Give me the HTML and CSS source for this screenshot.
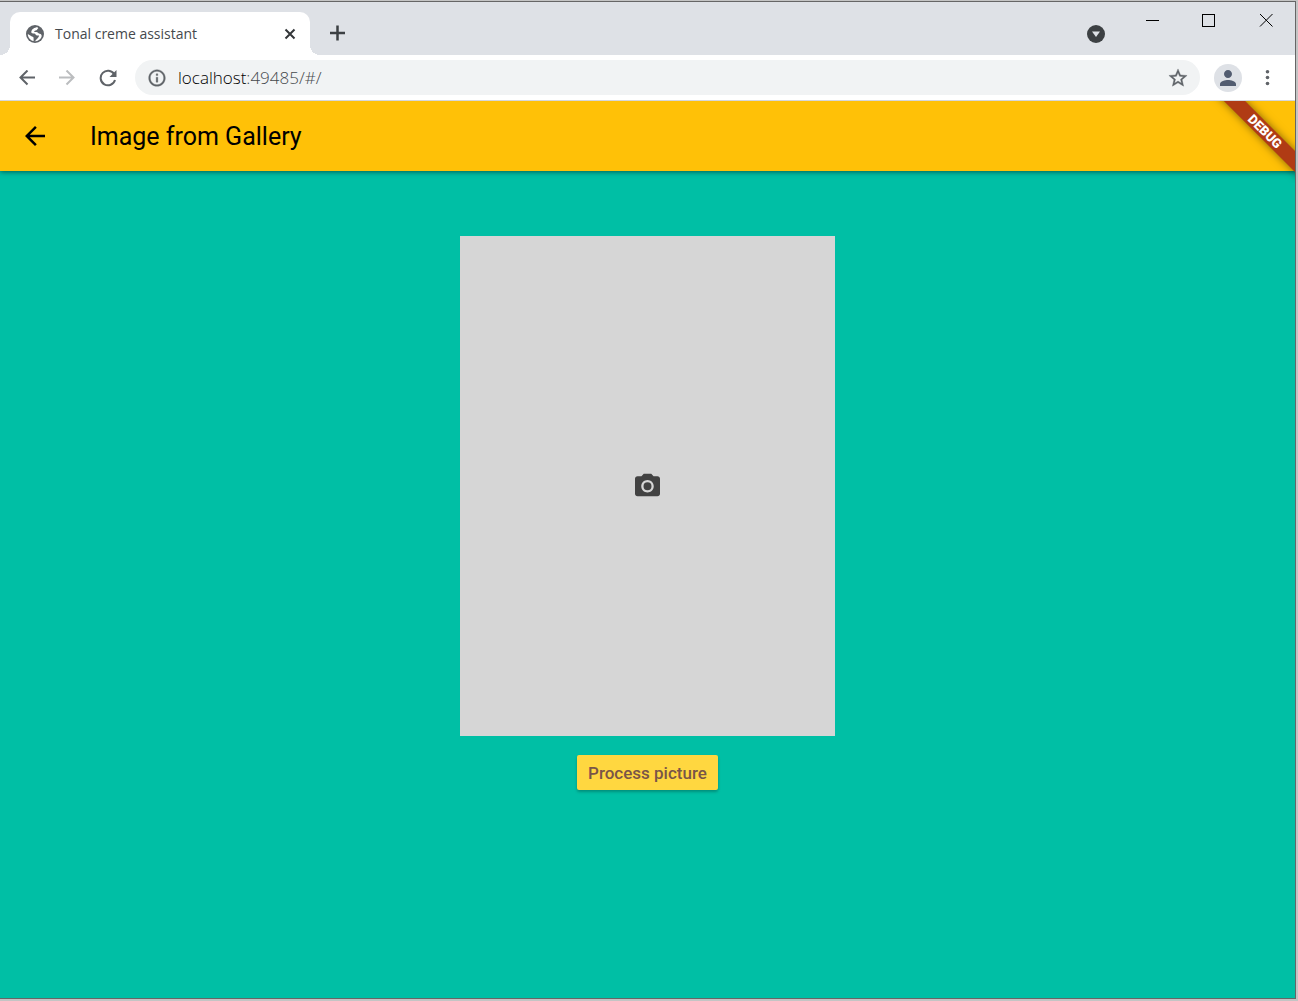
FILE: index.html
```html
<!DOCTYPE html>
<html lang="en">
<head>
<meta charset="utf-8">
<title>Tonal creme assistant</title>
<link rel="stylesheet" href="styles.css">
</head>
<body>
<div class="window">
  <header class="tab-strip">
    <div class="tab">
      <svg class="icon-20" viewBox="0 0 20 20"><circle cx="10" cy="10" r="9" fill="#5f6368"/><path fill="#fff" d="M12.500 3.300C9.500 3.400 6.300 5.400 6.300 8c0 1.600 1.500 1.500 3 1.600 1.400 0 1.100 1.800 2.600 1.800h2.200c-.3 2.400-2.400 3-3.300 4.900-.4.900-1.300 1-2.200.8v-2.600c0-1.300-.5-1.800-1.700-1.900L2.800 10c0 4 3.200 7.200 7.200 7.200 3 0 5.400-1.800 6.500-4.300.6-1.400-.3-2.900-1.900-3.100-1.800-.2-1.600-1.700-3.200-1.700H9.200c0-1.600 1.100-1.500 2.100-1.800 1.100-.3 1-1.400 2-2z"/></svg>
      <span class="tab-title">Tonal creme assistant</span>
      <button class="plain" aria-label="Close tab"><svg class="icon-12" viewBox="0 0 12 12" stroke="#333639" stroke-width="2"><path d="M1.500 1.500l9 9M10.500 1.500l-9 9"/></svg></button>
    </div>
    <button class="plain new-tab" aria-label="New tab"><svg class="icon-16" viewBox="0 0 16 16" stroke="#3c4043" stroke-width="2.500"><path d="M8.500 .5v15M1 8h15"/></svg></button>
    <button class="plain tab-search" aria-label="Search tabs"><svg class="icon-18" viewBox="0 0 18 18"><circle cx="9" cy="9" r="9" fill="#3c4043"/><path d="M5 6.500h8L9 12z" fill="#dee1e6"/></svg></button>
    <div class="window-controls">
      <button class="plain" aria-label="Minimize"><svg class="icon-14" viewBox="0 0 14 14" stroke="#000"><path d="M1 7.500H14"/></svg></button>
      <button class="plain" aria-label="Maximize"><svg class="icon-14" viewBox="0 0 14 14" stroke="#000" fill="none"><path d="M.5 1.500h12v12H.5z" shape-rendering="crispEdges"/></svg></button>
      <button class="plain" aria-label="Close"><svg class="icon-14" viewBox="0 0 14 14" stroke="#000"><path d="M1 1l12.500 12.500M13.500 1L1 13.500"/></svg></button>
    </div>
  </header>
  <nav class="toolbar">
    <button class="plain" aria-label="Back"><svg class="icon-16" viewBox="0 0 16 16" fill="none" stroke="#5f6368" stroke-width="2"><path d="M16 7.500H1.500M8.500 .5l-7 7 7 7"/></svg></button>
    <button class="plain" aria-label="Forward"><svg class="icon-16" viewBox="0 0 16 16" fill="none" stroke="#bbbdbf" stroke-width="2"><path d="M0 7.500h14.500M7.500 .5l7 7-7 7"/></svg></button>
    <button class="plain" aria-label="Reload"><svg class="icon-18" viewBox="0 0 18 18" fill="none"><path d="M15.200 5.200A7.300 7.300 0 1 0 16 11" stroke="#5f6368" stroke-width="2"/><path d="M17.500 1v7h-7z" fill="#5f6368"/></svg></button>
    <div class="omnibox">
      <svg class="icon-20" viewBox="0 0 24 24" fill="#5f6368"><path stroke="#5f6368" stroke-width=".4" d="M11 7h2v2h-2zm0 4h2v6h-2zm1-9C6.480 2 2 6.480 2 12s4.480 10 10 10 10-4.480 10-10S17.520 2 12 2zm0 18c-4.410 0-8-3.590-8-8s3.590-8 8-8 8 3.590 8 8-3.590 8-8 8z"/></svg>
      <a class="url" href="#/"><span class="host">localhost</span>:49485/#/</a>
      <button class="plain" aria-label="Bookmark this tab"><svg class="icon-20" viewBox="1 1 22 22" fill="#5f6368"><path stroke="#5f6368" stroke-width=".4" d="M22 9.240l-7.190-.62L12 2 9.190 8.630 2 9.240l5.460 4.730L5.820 21 12 17.270 18.180 21l-1.630-7.030L22 9.240zM12 15.400l-3.760 2.270 1-4.280-3.320-2.880 4.380-.38L12 6.100l1.710 4.040 4.380.38-3.320 2.880 1 4.280L12 15.400z"/></svg></button>
    </div>
    <button class="plain profile" aria-label="Profile"><svg class="icon-16" viewBox="4 4 16 16" fill="#525c70"><path d="M12 12c2.210 0 4-1.790 4-4s-1.790-4-4-4-4 1.790-4 4 1.790 4 4 4zm0 2c-2.670 0-8 1.340-8 4v2h16v-2c0-2.660-5.330-4-8-4z"/></svg></button>
    <button class="plain" aria-label="Menu"><svg class="icon-16" viewBox="0 0 16 16" fill="#5f6368"><circle cx="8.500" cy="1.800" r="1.800"/><circle cx="8.500" cy="7.500" r="1.800"/><circle cx="8.500" cy="13.500" r="1.800"/></svg></button>
  </nav>
  <div class="app">
    <header class="app-bar">
      <button class="plain" aria-label="Go back"><svg class="icon-20" viewBox="4 4 16 16"><path d="M20 11H7.830l5.590-5.590L12 4l-8 8 8 8 1.410-1.410L7.830 13H20v-2z"/></svg></button>
      <h1>Image from Gallery</h1>
      <div class="banner"><span>DEBUG</span></div>
    </header>
    <main>
      <div class="preview">
        <svg class="icon-30" viewBox="0.400 0.800 24 24" fill="#424242"><path fill-rule="evenodd" d="M9 3L7.170 5H4c-1.100 0-2 .9-2 2v12c0 1.100.9 2 2 2h16c1.100 0 2-.9 2-2V7c0-1.100-.9-2-2-2h-3.170L15 3H9zm3 15c-2.760 0-5-2.240-5-5s2.240-5 5-5 5 2.240 5 5-2.240 5-5 5zM12 9.800a3.200 3.200 0 1 0 0 6.400 3.200 3.200 0 0 0 0-6.400z"/></svg>
      </div>
      <button class="process">Process picture</button>
    </main>
  </div>
</div>
</body>
</html>
```
FILE: styles.css
```css
* { box-sizing: border-box; }

body {
  margin: 0;
  min-height: 100vh;
  padding: 1px 2px 2px 0;
  display: flex;
  background: #c4c4c4;
  font-family: "Open Sans", sans-serif;
}

svg { display: block; flex: none; }
.icon-12 { width: 12px; height: 12px; }
.icon-14 { width: 14px; height: 14px; }
.icon-16 { width: 16px; height: 16px; }
.icon-18 { width: 18px; height: 18px; }
.icon-20 { width: 20px; height: 20px; }
.icon-30 { width: 30px; height: 30px; }

.plain {
  border: 0;
  padding: 0;
  background: none;
  flex: none;
}

.window {
  flex: 1;
  display: flex;
  flex-direction: column;
  border: 1px solid #666;
  border-left: 0;
}

.tab-strip {
  height: 53px;
  display: flex;
  align-items: flex-end;
  padding-left: 10px;
  background: #dee1e6;
}

.tab {
  position: relative;
  width: 300px;
  height: 43px;
  display: flex;
  align-items: center;
  gap: 10px;
  padding: 0 14px 0 15px;
  border-radius: 10px 10px 0 0;
  background: #fff;
}

/* Flared feet where the tab meets the toolbar */
.tab::before,
.tab::after {
  content: "";
  position: absolute;
  bottom: 0;
  width: 10px;
  height: 10px;
}
.tab::before { right: 100%; background: radial-gradient(circle at 0 0, #dee1e6 10px, #fff 10px); }
.tab::after { left: 100%; background: radial-gradient(circle at 100% 0, #dee1e6 10px, #fff 10px); }

.tab-title {
  flex: 1;
  font-size: 14px;
  line-height: 20px;
  color: #45494d;
}

.new-tab { margin: 0 auto 14px 19px; }
.tab-search { margin-bottom: 12px; }

.window-controls {
  align-self: flex-start;
  display: flex;
  gap: 43px;
  padding: 11px 22px 0 40px;
}

.toolbar {
  height: 46px;
  display: flex;
  align-items: center;
  padding: 0 20px 0 19px;
  gap: 24px;
  border-bottom: 1px solid #d5d7dc;
  background: #fff;
}

.omnibox {
  flex: 1;
  height: 35px;
  margin: 0 -10px 0 -6px;
  display: flex;
  align-items: center;
  gap: 11px;
  padding: 0 12px;
  border-radius: 18px;
  background: #f1f3f4;
}

.url {
  flex: 1;
  font-size: 17px;
  line-height: 24px;
  font-weight: 300;
  color: #45494d;
  text-decoration: none;
}
.host { color: #000; }

.profile {
  width: 28px;
  height: 28px;
  margin-right: -7px;
  display: grid;
  place-items: center;
  border-radius: 50%;
  background: #dee1e6;
}

.app {
  flex: 1;
  display: flex;
  flex-direction: column;
  background: #00bfa5;
  font-family: Roboto, sans-serif;
}

.app-bar {
  position: relative;
  height: 70px;
  display: flex;
  align-items: center;
  gap: 45px;
  padding: 0 25px;
  background: #ffc107;
  box-shadow: 0 1px 5px rgba(0, 0, 0, .5);
  clip-path: inset(0 0 -12px 0);
}

h1 {
  margin: 0;
  padding-top: 2px;
  font-size: 25px;
  line-height: 30px;
  font-weight: 400;
  color: #000;
}

/* Diagonal ribbon across the top right corner */
.banner {
  position: absolute;
  top: 0;
  right: 0;
  width: 90px;
  height: 90px;
  padding: 0 0 30px 30px;
  display: grid;
  place-items: center;
  overflow: hidden;
}
.banner span {
  width: 140px;
  margin: 0 -40px;
  transform: rotate(45deg);
  background: #b03b14;
  box-shadow: 0 0 8px rgba(0, 0, 0, .5);
  color: #fff;
  font-size: 13px;
  line-height: 15px;
  font-weight: 900;
  text-align: center;
}

main {
  flex: 1;
  display: flex;
  flex-direction: column;
  align-items: center;
  gap: 19px;
  padding: 65px 0;
}

.preview {
  width: 375px;
  height: 500px;
  display: grid;
  place-items: center;
  background: #d6d6d6;
}

.process {
  height: 35px;
  padding: 0 11px;
  border: 0;
  border-radius: 2px;
  background: #ffd740;
  box-shadow: 0 2px 3px rgba(0, 0, 0, .25);
  color: #795548;
  font: 500 17px/24px Roboto, sans-serif;
}
```
